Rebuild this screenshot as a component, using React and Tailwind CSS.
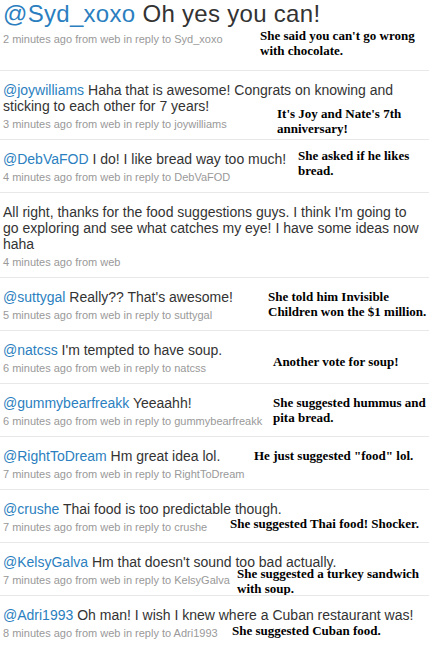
const tweets = [
  {
    user: 'joywilliams',
    text: 'Haha that is awesome! Congrats on knowing and sticking to each other for 7 years!',
    time: '3 minutes ago',
    note: ["It's Joy and Nate's 7th", 'anniversary!'],
    notePos: 'top-[35px] left-[277px]',
  },
  {
    user: 'DebVaFOD',
    text: 'I do! I like bread way too much!',
    time: '4 minutes ago',
    note: ['She asked if he likes', 'bread.'],
    notePos: 'top-[8px] left-[298px]',
  },
  {
    text: "All right, thanks for the food suggestions guys. I think I'm going to go exploring and see what catches my eye! I have some ideas now haha",
    time: '4 minutes ago',
  },
  {
    user: 'suttygal',
    text: "Really?? That's awesome!",
    time: '5 minutes ago',
    note: ['She told him Invisible', 'Children won the $1 million.'],
    notePos: 'top-[11px] left-[268px]',
  },
  {
    user: 'natcss',
    text: "I'm tempted to have soup.",
    time: '6 minutes ago',
    note: ['Another vote for soup!'],
    notePos: 'top-[23px] left-[273px]',
  },
  {
    user: 'gummybearfreakk',
    text: 'Yeeaahh!',
    time: '6 minutes ago',
    note: ['She suggested hummus and', 'pita bread.'],
    notePos: 'top-[11px] left-[273px]',
  },
  {
    user: 'RightToDream',
    text: 'Hm great idea lol.',
    time: '7 minutes ago',
    note: ['He just suggested "food" lol.'],
    notePos: 'top-[11px] left-[254px]',
  },
  {
    user: 'crushe',
    text: 'Thai food is too predictable though.',
    time: '7 minutes ago',
    note: ['She suggested Thai food! Shocker.'],
    notePos: 'top-[26px] left-[230px]',
  },
  {
    user: 'KelsyGalva',
    text: "Hm that doesn't sound too bad actually.",
    time: '7 minutes ago',
    note: ['She suggested a turkey sandwich', 'with soup.'],
    notePos: 'top-[23px] left-[237px]',
  },
  {
    user: 'Adri1993',
    text: 'Oh man! I wish I knew where a Cuban restaurant was!',
    time: '8 minutes ago',
    note: ['She suggested Cuban food.'],
    notePos: 'top-[27px] left-[232px]',
  },
];

// notes pasted over the screenshot
function Note({ lines, pos }) {
  return (
    <div
      className={`absolute ${pos} whitespace-nowrap text-[13px] leading-[15px] font-bold text-black`}
      style={{ fontFamily: '"Liberation Serif", "Times New Roman", serif' }}
    >
      {lines.map((l, i) => (
        <div key={i}>{l}</div>
      ))}
    </div>
  );
}

function Meta({ time, reply }) {
  return (
    <div className="text-[11px] leading-[14px] text-[#999999]">
      {time} from web{reply ? ` in reply to ${reply}` : ''}
    </div>
  );
}

export default function App() {
  return (
    <div
      className="w-[429px] h-[646px] overflow-hidden bg-white text-[#333333]"
      style={{ fontFamily: '"Liberation Sans", Arial, sans-serif' }}
    >
      {/* tweet principal */}
      <div className="relative pl-[3px] pt-[1px] pb-[24px]">
        <h1 className="text-[24px] leading-[26px] font-normal tracking-[0.3px]">
          <span className="text-[#2b7fc0]">@Syd_xoxo</span> Oh yes you can!
        </h1>
        <div className="mt-[5px]">
          <Meta time="2 minutes ago" reply="Syd_xoxo" />
        </div>
        <Note lines={["She said you can't go wrong", 'with chocolate.']} pos="top-[28px] left-[260px]" />
      </div>

      {tweets.map((t, i) => (
        <div key={i} className="relative border-t border-[#e8e8e8] pl-[3px] pr-[6px] pt-[11px] pb-[8px]">
          <p className="text-[14px] leading-[16px]">
            {t.user && <span className="text-[#2b7fc0]">@{t.user}</span>}
            {t.user ? ' ' : ''}
            {t.text}
          </p>
          <div className="mt-[3px]">
            <Meta time={t.time} reply={t.user} />
          </div>
          {t.note && <Note lines={t.note} pos={t.notePos} />}
        </div>
      ))}
    </div>
  );
}
